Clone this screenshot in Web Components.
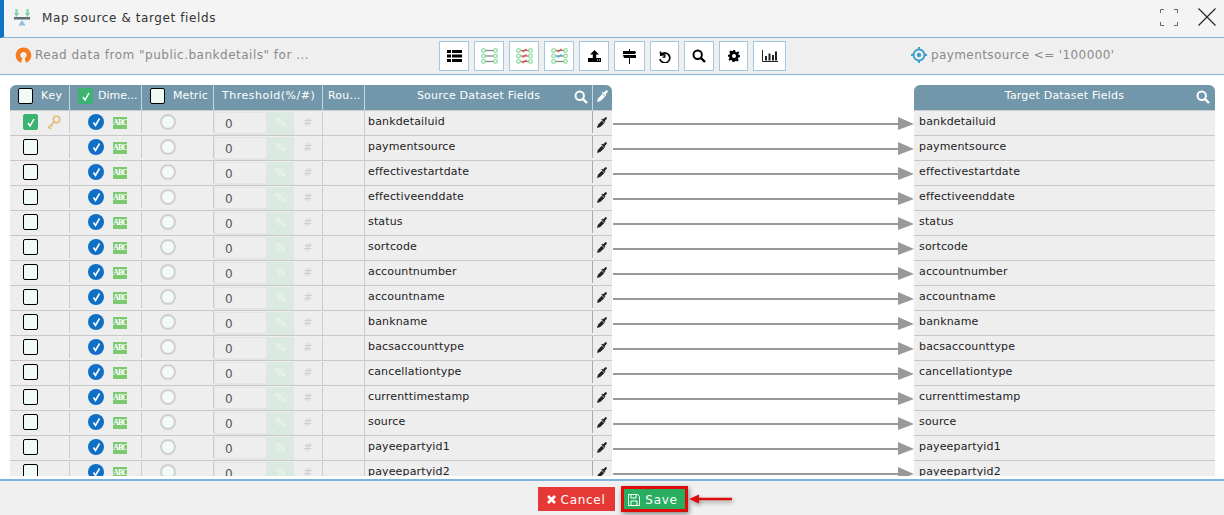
<!DOCTYPE html>
<html>
<head>
<meta charset="utf-8">
<title>Map source & target fields</title>
<style>
html, body { margin: 0; height: 100%; background: #fff; }
body { font-family: "DejaVu Sans", sans-serif; }
</style>
</head>
<body>
<map-dialog></map-dialog>

<script>
const fields = ['bankdetailuid', 'paymentsource', 'effectivestartdate', 'effectiveenddate', 'status', 'sortcode',
    'accountnumber', 'accountname', 'bankname', 'bacsaccounttype', 'cancellationtype', 'currenttimestamp',
    'source', 'payeepartyid1', 'payeepartyid2']

const COLS = '60px 72px 72px 109px 42px 228px 19px'

const searchIcon = (color) => `<svg width="14" height="14" viewBox="0 0 14 14"><circle cx="5.7" cy="5.7" r="4.2" fill="none" stroke="${color}" stroke-width="2"/><path d="M8.8 8.8L13 13" stroke="${color}" stroke-width="2.4"/></svg>`
const pickerIcon = (color, w = 11, h = 12) => `<svg width="${w}" height="${h}" viewBox="0 0 11 12"><path d="M0 12L1 8.500 5.300 4 8 6.700 3.500 11z" fill="${color}"/><path d="M4.700 2.800L5.700 1.800 6.600 2.700 8.500.8C9.200.1 10 .1 10.500.6S11 1.800 10.300 2.500L8.400 4.400 9.300 5.300 8.300 6.300z" fill="${color}"/></svg>`

class AppCheck extends HTMLElement {
    constructor() {
        super()
        this.attachShadow({mode: 'open'}).innerHTML = `
        <style>
        :host { display: block; width: 15px; height: 16px; box-sizing: border-box; border: 1px solid #000; border-radius: 2px; background: #f1fbf6; }
        :host([on]) { border-color: #3cb371; background: #3cb371; }
        svg { display: none; margin: 3px 0 0 3px; }
        :host([on]) svg { display: block; }
        </style>
        <svg width="8" height="9" viewBox="0 0 8 9"><path d="M1 5l2 3 4-7" fill="none" stroke="#fff" stroke-width="1.5"/></svg>
        `
    }
}
customElements.define('app-check', AppCheck)

class ToolBtn extends HTMLElement {
    constructor() {
        super()
        this.attachShadow({mode: 'open'}).innerHTML = `
        <style>
        :host { display: flex; align-items: center; justify-content: center; box-sizing: border-box; width: 30px; height: 30px; background: #fff; border: 1px solid #a3c8e2; }
        </style>
        <slot></slot>
        `
    }
}
customElements.define('tool-btn', ToolBtn)

class TitleBar extends HTMLElement {
    constructor() {
        super()
        this.attachShadow({mode: 'open'}).innerHTML = `
        <style>
        :host { display: flex; align-items: center; box-sizing: border-box; height: 38px; padding: 0 8px 3px 10px; background: #f4f4f4; border-left: 4px solid #0f74c5; border-bottom: 1px solid #86b4d8; }
        .logo { display: block; margin-right: 12px; }
        h1 { flex: 1; margin: 0; padding-top: 2px; font: 400 12px "DejaVu Sans", sans-serif; letter-spacing: .6px; color: #333; }
        .expand { margin-right: 20px; }
        </style>
        <svg class="logo" width="16" height="17" viewBox="0 0 16 17">
            <path d="M2.500 0v5M13.500 0v5" stroke="#8ed8b4" stroke-width="2.500"/>
            <path d="M0 4L2.500 8 5 4zM11 4L13.500 8 16 4z" fill="#7fd0a8"/>
            <rect y="8" width="16" height="2.500" fill="#5f6e75"/>
            <path d="M8 11l-3.500 5.500h7z" fill="#8dbfe0"/>
        </svg>
        <h1><slot></slot></h1>
        <svg class="expand" width="18" height="17" viewBox="0 0 18 17"><path d="M.5 4V.5H4M14 .5h3.5V4M.5 13v3.5H4M14 16.500h3.5V13" fill="none" stroke="#666" stroke-width="1"/></svg>
        <svg width="18" height="18" viewBox="0 0 18 18"><path d="M.5.5l17 17M17.500.5l-17 17" stroke="#222" stroke-width="1.100"/></svg>
        `
    }
}
customElements.define('title-bar', TitleBar)

class ActionBar extends HTMLElement {
    constructor() {
        super()
        const nodes = (a, b, c) => [[2.5, a], [8, b], [13.5, c]].map(([y, col]) => `
            <circle cx="2.500" cy="${y}" r="1.800" fill="none" stroke="#8fdfa0" stroke-width="1.300"/>
            <circle cx="14.500" cy="${y}" r="1.800" fill="none" stroke="#8fdfa0" stroke-width="1.300"/>
            <path d="M4.500 ${y}h8" stroke="#888" stroke-width="1.300"/>
            ${col ? `<path d="M6.500 ${y + 1.500}l4-3" stroke="${col}" stroke-width="1.400"/>` : ''}`).join('')
        this.attachShadow({mode: 'open'}).innerHTML = `
        <style>
        :host { display: grid; grid-template-columns: 439px auto 1fr; align-items: center; box-sizing: border-box; height: 37px; background: #efefef; border-bottom: 1px solid #86b4d8; font: 12px "DejaVu Sans", sans-serif; letter-spacing: .5px; color: #8a8a8a; }
        .note { display: flex; align-items: center; gap: 3px; white-space: nowrap; padding-bottom: 2px; }
        .left { padding-left: 15px; }
        .right { padding-left: 125px; gap: 4px; letter-spacing: .4px; }
        .tools { display: flex; gap: 5px; }
        </style>
        <div class="note left">
            <svg width="17" height="17" viewBox="0 0 17 17"><path d="M6 15.700A7.800 7.800 0 1 1 11 15.700L9.700 11.200A3.200 3.200 0 1 0 7.300 11.200z" fill="#f47b20"/></svg>
            <slot name="read"></slot>
        </div>
        <div class="tools">
            <tool-btn><svg width="15" height="12" viewBox="0 0 15 12"><path d="M0 0h4v3H0zM5 0h10v3H5zM0 4.500h4v3H0zM5 4.500h10v3H5zM0 9h4v3H0zM5 9h10v3H5z"/></svg></tool-btn>
            <tool-btn><svg width="17" height="16" viewBox="0 0 17 16">${nodes()}</svg></tool-btn>
            <tool-btn><svg width="17" height="16" viewBox="0 0 17 16">${nodes('#f04040', '#f04040', '#f04040')}</svg></tool-btn>
            <tool-btn><svg width="17" height="16" viewBox="0 0 17 16">${nodes('#f04040', '#30b0e0')}</svg></tool-btn>
            <tool-btn><svg width="13" height="12" viewBox="0 0 13 12"><path d="M6.500 0L11 4.500H8.200V8H13V12H0V8H4.800V4.500H2z"/><path d="M9 9.500h1v1H9zM11 9.500h1v1h-1z" fill="#fff"/></svg></tool-btn>
            <tool-btn style="width:31px"><svg width="13" height="15" viewBox="0 0 13 15"><path d="M6 0h1v2h5l1 1.500-1 1.500H0V2h6zM0 6h13v3H1zM6 9h1v6H6z"/></svg></tool-btn>
            <tool-btn style="width:29px"><svg width="13" height="13" viewBox="0 0 13 13"><path d="M2.500 1.500l.3 3.500 3.500-.3M3 4.600A5 5 0 1 1 1.900 9" fill="none" stroke="#000" stroke-width="1.700"/><path d="M6.800 3.800v3.400H4.500" fill="none" stroke="#000" stroke-width="1.300"/></svg></tool-btn>
            <tool-btn>${searchIcon('#000')}</tool-btn>
            <tool-btn style="width:29px"><svg width="12" height="12" viewBox="0 0 12 12"><path d="M5 0h2l.4 1.700 1.300.5L10.200 1.300l1 1.300-.9 1.500.5 1.200L12 5v2l-1.600.5-.5 1.300.9 1.400-1.400 1.400-1.400-.9-1.300.5L6.500 12h-2l-.4-1.600-1.300-.5-1.400.9L.6 9.400l.9-1.400-.5-1.200L0 6.500V5l1.600-.5.5-1.300-.9-1.500L2.600.4l1.400.9 1.200-.5zM6 4a2 2 0 1 0 0 4 2 2 0 0 0 0-4z"/></svg></tool-btn>
            <tool-btn style="width:33px"><svg width="16" height="12" viewBox="0 0 16 12"><path d="M.5 0v11.500H16" fill="none" stroke="#222"/><path d="M3 6h2v4.500H3zM6.500 3.500h2v7h-2zM10 5h2v5.500h-2zM13 1.500h2v9h-2z" fill="#222"/></svg></tool-btn>
        </div>
        <div class="note right">
            <svg width="16" height="16" viewBox="0 0 16 16"><circle cx="8" cy="8" r="5.500" fill="none" stroke="#3a9fd0" stroke-width="2"/><circle cx="8" cy="8" r="2.200" fill="#3a9fd0"/><path d="M8 0v3M8 13v3M0 8h3M13 8h3" stroke="#3a9fd0" stroke-width="2"/></svg>
            <slot name="filter"></slot>
        </div>
        `
    }
}
customElements.define('action-bar', ActionBar)

class SourceHead extends HTMLElement {
    constructor() {
        super()
        this.attachShadow({mode: 'open'}).innerHTML = `
        <style>
        :host { display: grid; grid-template-columns: ${COLS}; box-sizing: border-box; height: 26px; background: #7297aa; border-radius: 6px 6px 0 0; color: #fff; font: 11px "DejaVu Sans", sans-serif; letter-spacing: .5px; border-bottom: 1px solid #ccc; }
        div { display: flex; align-items: center; box-sizing: border-box; border-right: 1px solid #c6d4dc; white-space: nowrap; padding-bottom: 4px; overflow: hidden; }
        .c { justify-content: center; }
        div:last-child { border-right: 0; }
        app-check { flex: none; margin-top: 1px; }
        .src { position: relative; justify-content: center; padding-right: 0; letter-spacing: .2px; }
        .src svg { position: absolute; right: 4px; top: 5px; }
        </style>
        <div style="padding-left:8px;gap:8px"><app-check></app-check>Key</div>
        <div style="padding-left:8px;gap:5px;letter-spacing:0">
            <app-check on></app-check>Dime...</div>
        <div style="padding-left:8px;gap:8px;letter-spacing:.1px"><app-check></app-check>Metric</div>
        <div style="padding-left:8px">Threshold(%/#)</div>
        <div style="padding-left:5px;letter-spacing:.2px">Rou...</div>
        <div class="src">Source Dataset Fields${searchIcon('#fff')}</div>
        <div class="c">${pickerIcon('#fff')}</div>
        `
    }
}
customElements.define('source-head', SourceHead)

class SourceRow extends HTMLElement {
    constructor() {
        super()
        const on = this.hasAttribute('key')
        this.attachShadow({mode: 'open'}).innerHTML = `
        <style>
        :host { display: grid; grid-template-columns: ${COLS}; align-items: start; box-sizing: border-box; height: 25px; background: #eee; border-bottom: 1px solid #c8c8c8; font: 11px "DejaVu Sans", sans-serif; letter-spacing: .15px; color: #222; }
        .cell { display: flex; align-items: center; box-sizing: border-box; height: 22px; border-right: 1px solid #ccc; }
        .key { padding-left: 13px; gap: 9px; }
        .dim { padding-left: 18px; gap: 9px; }
        .metric { padding-left: 18px; }
        .dot { width: 16px; height: 16px; border-radius: 50%; box-sizing: border-box; }
        .blue { background: #0f6fc4; display: flex; align-items: center; justify-content: center; }
        .empty { background: #f1faf5; border: 2px solid #d0d0d0; }
        .abc { width: 14px; height: 12px; margin-top: 1px; background: #7cc96f; color: #fff; font: 700 8px/12px "Liberation Serif", serif; letter-spacing: -.9px; text-align: center; overflow: hidden; }
        .thr { display: grid; grid-template-columns: 53px 27px 1fr; height: 24px; border-right: 0; }
        .thr span { display: flex; align-items: center; justify-content: center; font-size: 11px; color: #d0d0d0; padding-bottom: 2px; box-sizing: border-box; height: 23px; }
        .thr .val { justify-content: flex-start; padding: 3px 0 0 10px; font-size: 12px; letter-spacing: 0; color: #555; background: #eee; border: 1px solid #e4e4e4; border-bottom-width: 2px; }
        .thr .pct { background: #dbeae0; color: #f0f5f1; }
        .thr .hash { border-right: 1px solid #ccc; }
        .name { padding: 0 0 2px 3px; white-space: nowrap; height: 23px; border-right: 0; }
        .round { border-right: 1px solid #ccc; height: 24px; }
        .pick { justify-content: center; border-right: 0; border-left: 1px solid #aaa; margin-left: -1px; padding-right: 2px; }
        </style>
        <div class="cell key">
            <app-check ${on ? 'on' : ''}></app-check>
            ${on ? `<svg width="14" height="15" viewBox="0 0 14 15"><circle cx="9.500" cy="4.500" r="3.200" fill="none" stroke="#e3bc72" stroke-width="1.600"/><path d="M7 7L1 13M2 12l2 2M4 10l1.500 1.500" stroke="#e3bc72" stroke-width="1.600" fill="none"/></svg>` : ''}
        </div>
        <div class="cell dim">
            <span class="dot blue"><svg width="9" height="10" viewBox="0 0 9 10"><path d="M1.500 5.500l2 3 4-7" fill="none" stroke="#fff" stroke-width="1.600"/></svg></span>
            <span class="abc">ABC</span>
        </div>
        <div class="cell metric"><span class="dot empty"></span></div>
        <div class="cell thr"><span class="val">0</span><span class="pct">%</span><span class="hash">#</span></div>
        <div class="cell round"></div>
        <div class="cell name"><slot></slot></div>
        <div class="cell pick">${pickerIcon('#222', 10, 11)}</div>
        `
    }
}
customElements.define('source-row', SourceRow)

class TargetHead extends HTMLElement {
    constructor() {
        super()
        this.attachShadow({mode: 'open'}).innerHTML = `
        <style>
        :host { position: relative; display: flex; align-items: center; justify-content: center; box-sizing: border-box; height: 26px; padding: 0 0 4px 0; background: #7297aa; border-radius: 6px 6px 0 0; border-bottom: 1px solid #ccc; color: #fff; font: 11px "DejaVu Sans", sans-serif; letter-spacing: .2px; }
        svg { position: absolute; right: 5px; top: 5px; }
        </style>
        <slot></slot>${searchIcon('#fff')}
        `
    }
}
customElements.define('target-head', TargetHead)

class TargetRow extends HTMLElement {
    constructor() {
        super()
        this.attachShadow({mode: 'open'}).innerHTML = `
        <style>
        :host { display: flex; align-items: center; box-sizing: border-box; height: 25px; padding: 0 0 3px 5px; background: #eee; border-bottom: 1px solid #c8c8c8; font: 11px "DejaVu Sans", sans-serif; letter-spacing: .15px; color: #222; }
        </style>
        <slot></slot>
        `
    }
}
customElements.define('target-row', TargetRow)

class LinkArrows extends HTMLElement {
    constructor() {
        super()
        let marks = ''
        for (let i = 0; i < fields.length; i++) {
            const y = 39 + i * 25
            marks += `<path d="M1 ${y}H290" stroke="#999" stroke-width="2"/><path d="M286 ${y - 7}L302 ${y}L286 ${y + 6}z" fill="#999"/>`
        }
        this.attachShadow({mode: 'open'}).innerHTML = `
        <style>
        :host { display: block; width: 302px; flex: none; overflow: hidden; }
        svg { display: block; }
        </style>
        <svg width="302" height="391" viewBox="0 0 302 391">${marks}</svg>
        `
    }
}
customElements.define('link-arrows', LinkArrows)

class DialogFooter extends HTMLElement {
    constructor() {
        super()
        this.attachShadow({mode: 'open'}).innerHTML = `
        <style>
        :host { display: flex; align-items: center; justify-content: center; box-sizing: border-box; height: 36px; padding: 2px 0 0 1px; gap: 6px; background: #f0f0f0; border-top: 2px solid #7fb3dc; font: 12px "DejaVu Sans", sans-serif; letter-spacing: .7px; color: #fff; }
        .btn { display: flex; align-items: center; justify-content: center; gap: 5px; box-sizing: border-box; padding-top: 1px; }
        .cancel { width: 77px; height: 24px; background: #e63935; }
        .save { position: relative; width: 67px; height: 26px; background: #27ae60; border: 3px solid #e00b0b; box-shadow: 1px 2px 5px rgba(0,0,0,.45); padding-right: 2px; }
        .arrow { position: absolute; left: 65px; top: 5px; filter: drop-shadow(1px 2px 2px rgba(0,0,0,.4)); }
        </style>
        <div class="btn cancel">
            <svg width="9" height="9" viewBox="0 0 9 9"><path d="M1 1l7 7M8 1L1 8" stroke="#fff" stroke-width="2.800"/></svg>
            Cancel
        </div>
        <div class="btn save">
            <svg width="12" height="12" viewBox="0 0 12 12"><path d="M.5.500h9l2 2v9H.5z" fill="none" stroke="#fff"/><path d="M3 1v3h5V1M3 11V7h6v4" fill="none" stroke="#fff"/></svg>
            Save
            <svg class="arrow" width="44" height="10" viewBox="0 0 44 10"><path d="M0 5L10 .5V3.700H43V6.300H10V9.500z" fill="#e00b0b"/></svg>
        </div>
        `
    }
}
customElements.define('dialog-footer', DialogFooter)

class MapDialog extends HTMLElement {
    constructor() {
        super()
        const sourceRows = fields.map((f, i) => `<source-row ${i == 0 ? 'key' : ''}>${f}</source-row>`).join('')
        const targetRows = fields.map(f => `<target-row>${f}</target-row>`).join('')
        this.attachShadow({mode: 'open'}).innerHTML = `
        <style>
        :host { display: flex; flex-direction: column; height: 515px; overflow: hidden; }
        .body { flex: 1; display: flex; box-sizing: border-box; padding: 10px 9px 3px 10px; min-height: 0; }
        .side { height: 391px; overflow: hidden; }
        .source { width: 602px; flex: none; }
        .target { flex: 1; }
        </style>
        <title-bar>Map source &amp; target fields</title-bar>
        <action-bar>
            <span slot="read">Read data from "public.bankdetails" for ...</span>
            <span slot="filter">paymentsource &lt;= '100000'</span>
        </action-bar>
        <div class="body">
            <div class="side source"><source-head></source-head>${sourceRows}</div>
            <link-arrows></link-arrows>
            <div class="side target"><target-head>Target Dataset Fields</target-head>${targetRows}</div>
        </div>
        <dialog-footer></dialog-footer>
        `
    }
}
customElements.define('map-dialog', MapDialog)
</script>
</body>
</html>
